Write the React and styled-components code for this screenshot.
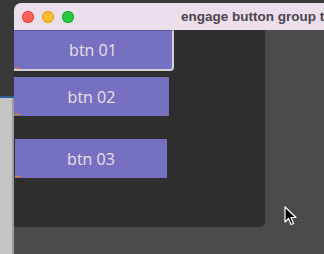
import React from "react";
import styled, { createGlobalStyle } from "styled-components";

const Global = createGlobalStyle`
  html, body {
    margin: 0;
    padding: 0;
    background: #4b4b4b;
    overflow: hidden;
  }
`;

const Desktop = styled.div`
  position: relative;
  display: flex;
  width: 324px;
  height: 254px;
  background: #4b4b4b;
  font-family: "Open Sans", "Liberation Sans", sans-serif;
`;

const LeftStrip = styled.div`
  flex: none;
  width: 14px;
  display: flex;
  flex-direction: column;
  .dark {
    height: 96px;
    background: #393939;
  }
  .blue {
    height: 2px;
    background: #2f5d90;
  }
  .light {
    flex: 1;
    background: linear-gradient(to right, #c4c4c4 0, #c4c4c4 12px, #9c9c9c 12px);
  }
`;

const WindowColumn = styled.div`
  flex: 1;
  min-width: 0;
  display: flex;
  flex-direction: column;
  padding-top: 3px;
  background: linear-gradient(to bottom, #373737 0, #373737 12px, #4b4b4b 12px);
`;

const TitleBar = styled.div`
  height: 27px;
  display: flex;
  align-items: center;
  padding-left: 8px;
  background: #ebdfeb;
  border-top-left-radius: 7px;
  overflow: hidden;
  white-space: nowrap;
`;

const Light = styled.span`
  width: 12px;
  height: 12px;
  border-radius: 50%;
  margin-right: 8px;
  background: ${(p) => p.color};
  box-shadow: inset 0 0 0 1px ${(p) => p.ring};
  flex: none;
`;

const Title = styled.span`
  margin-left: 99px;
  font-family: "Liberation Sans", Arial, sans-serif;
  font-weight: 700;
  font-size: 13.5px;
  color: #4c454d;
`;

const Content = styled.div`
  width: 251px;
  height: 197px;
  background: #2e2e2e;
  border-bottom-right-radius: 5px;
  display: flex;
  flex-direction: column;
  align-items: flex-start;
`;

const Button = styled.button`
  position: relative;
  box-sizing: border-box;
  width: ${(p) => p.w}px;
  height: ${(p) => p.h}px;
  margin-top: ${(p) => p.top}px;
  margin-left: ${(p) => p.left || 0}px;
  padding: 0;
  border: none;
  background: #7570bf;
  color: #e6e1ee;
  font-family: "Open Sans", sans-serif;
  font-size: 16px;
  ${(p) =>
    p.active &&
    `
    border-top: 1px solid #5a52a6;
    border-right: 2px solid #d3cdd6;
    border-bottom: 2px solid #d3cdd6;
    border-bottom-right-radius: 4px;
  `}
  &::after {
    content: "";
    position: absolute;
    left: 0;
    bottom: ${(p) => (p.active ? 0 : 1)}px;
    width: 6px;
    height: 1px;
    background: #e8821e;
  }
`;

const Cursor = styled.svg`
  position: absolute;
  left: 284px;
  top: 206px;
`;

export default function App() {
  return (
    <>
      <Global />
      <Desktop>
        <LeftStrip>
          <div className="dark" />
          <div className="blue" />
          <div className="light" />
        </LeftStrip>
        <WindowColumn>
          <TitleBar>
            <Light color="#fe5f57" ring="#e1463f" />
            <Light color="#febc2e" ring="#dea123" />
            <Light color="#28c840" ring="#1aab29" />
            <Title>engage button group test</Title>
          </TitleBar>
          <Content>
            <Button active w={160} h={41} top={0}>
              btn 01
            </Button>
            <Button w={155} h={39} top={6}>
              btn 02
            </Button>
            <Button w={152} h={39} top={23} left={1}>
              btn 03
            </Button>
          </Content>
        </WindowColumn>
        <Cursor width="14" height="20" viewBox="0 0 14 20">
          <path
            d="M1 1 L1 16 L4.5 12.5 L7 18.5 L9.5 17.5 L7 11.5 L12 11.5 Z"
            fill="#000"
            stroke="#fff"
            strokeWidth="1.2"
            strokeLinejoin="round"
          />
        </Cursor>
      </Desktop>
    </>
  );
}
